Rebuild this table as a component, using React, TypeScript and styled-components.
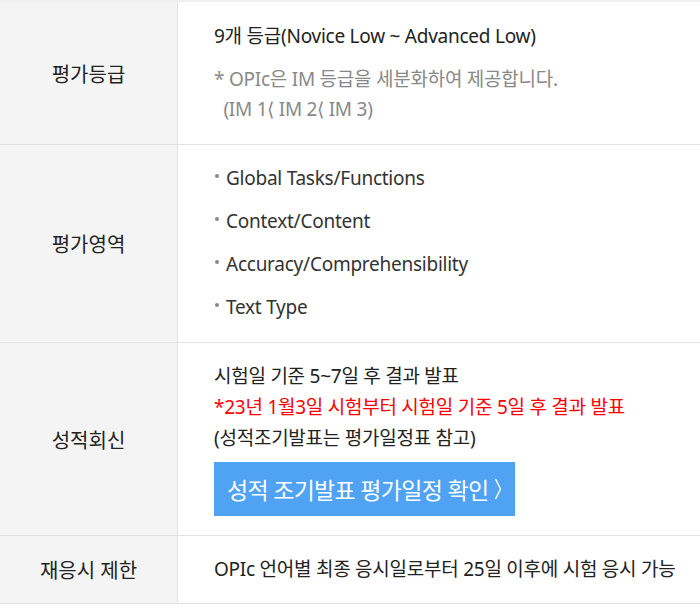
import React from "react";
import styled, { createGlobalStyle } from "styled-components";

const Global = createGlobalStyle`
  html, body { margin: 0; padding: 0; background: #fff; }
  body { font-family: "Noto Sans", "Noto Sans CJK KR", sans-serif; color: #222; }
`;

const Table = styled.div`
  width: 700px;
  border-top: 2px solid #efefef;
  display: grid;
  grid-template-columns: 178px 1fr;
`;

const Label = styled.div`
  background: #f4f4f4;
  border-right: 1px solid #e2e2e2;
  border-bottom: 1px solid #e2e2e2;
  display: flex;
  align-items: center;
  justify-content: center;
  font-size: 20px;
  color: #222;
`;

const Cell = styled.div<{ $pt: number; $pb: number }>`
  border-bottom: 1px solid #e2e2e2;
  padding: ${(p) => p.$pt}px 10px ${(p) => p.$pb}px 36px;
  font-size: 19px;
  letter-spacing: -0.25px;
  display: flex;
  flex-direction: column;
  justify-content: center;
`;

const Line = styled.div<{ $lh: number; $color?: string }>`
  line-height: ${(p) => p.$lh}px;
  color: ${(p) => p.$color || "#222"};
  white-space: nowrap;
`;

const Note = styled.div`
  margin-top: 13px;
  color: #888;
  line-height: 30px;
  white-space: pre;
`;

const Bullet = styled.div`
  line-height: 43px;
  color: #333;
  display: flex;
  align-items: center;
  &::before {
    content: "";
    width: 4px;
    height: 4px;
    border-radius: 50%;
    background: #888;
    margin: 0 7px 6px 1px;
  }
`;

const Button = styled.a`
  margin-top: 8px;
  align-self: flex-start;
  height: 54px;
  display: flex;
  align-items: center;
  gap: 6px;
  padding: 0 13px 0 13px;
  background: #50a2f3;
  color: #fff;
  font-size: 23px;
  letter-spacing: -0.7px;
  text-decoration: none;
`;

const Chevron = () => (
  <svg width="8" height="24" viewBox="0 0 8 24" fill="none">
    <path d="M1.5 2 L6.5 12 L1.5 22" stroke="#fff" strokeWidth="1.5" />
  </svg>
);

export default function App() {
  return (
    <>
      <Global />
      <Table>
        <Label style={{ height: 142 }}>평가등급</Label>
        <Cell $pt={18} $pb={20}>
          <Line $lh={30}>9개 등급(Novice Low ~ Advanced Low)</Line>
          <Note>{"* OPIc은 IM 등급을 세분화하여 제공합니다.\n  (IM 1⟨ IM 2⟨ IM 3)"}</Note>
        </Cell>

        <Label>평가영역</Label>
        <Cell $pt={12} $pb={13}>
          <Bullet>Global Tasks/Functions</Bullet>
          <Bullet>Context/Content</Bullet>
          <Bullet>Accuracy/Comprehensibility</Bullet>
          <Bullet>Text Type</Bullet>
        </Cell>

        <Label>성적회신</Label>
        <Cell $pt={18} $pb={19}>
          <Line $lh={31}>시험일 기준 5~7일 후 결과 발표</Line>
          <Line $lh={31} $color="#ff0000">*23년 1월3일 시험부터 시험일 기준 5일 후 결과 발표</Line>
          <Line $lh={31}>(성적조기발표는 평가일정표 참고)</Line>
          <Button href="#">
            성적 조기발표 평가일정 확인
            <Chevron />
          </Button>
        </Cell>

        <Label>재응시 제한</Label>
        <Cell $pt={18} $pb={18}>
          <Line $lh={31}>OPIc 언어별 최종 응시일로부터 25일 이후에 시험 응시 가능</Line>
        </Cell>
      </Table>
    </>
  );
}
